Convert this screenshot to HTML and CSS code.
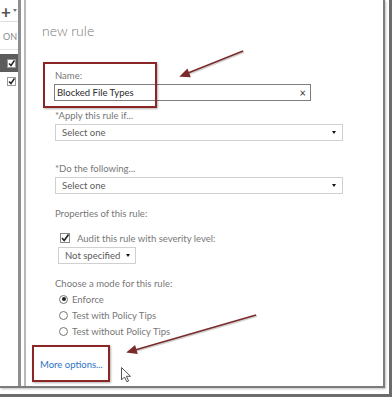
FILE: index.html
```html
<!DOCTYPE html>
<html lang="en">
<head>
    <meta charset="UTF-8">
    <title>new rule</title>
    <link rel="stylesheet" href="styles.css">
</head>
<body>
<div class="page">
    <div class="frame">
        <div class="shot">
            <div class="list">
                <div class="list-top"><span class="plus">+</span><span class="mini-caret"></span></div>
                <div class="list-head">ON</div>
                <div class="list-row selected"><span class="tick"></span></div>
                <div class="list-row"><span class="tick"></span></div>
            </div>
            <div class="panel">
                <div class="title">new rule</div>
                <div class="form">
                    <div class="label first">Name:</div>
                    <div class="input">
                        <span>Blocked File Types</span>
                        <span class="clear">&times;</span>
                    </div>

                    <div class="label gap-s">*Apply this rule if...</div>
                    <div class="select"><span>Select one</span><span class="caret"></span></div>

                    <div class="label gap-l">*Do the following...</div>
                    <div class="select"><span>Select one</span><span class="caret"></span></div>

                    <div class="label gap-m">Properties of this rule:</div>
                    <div class="check-row">
                        <span class="box checked"></span>
                        <span>Audit this rule with severity level:</span>
                    </div>
                    <div class="select small"><span>Not specified</span><span class="caret"></span></div>

                    <div class="label gap-mode">Choose a mode for this rule:</div>
                    <div class="radios">
                        <div class="radio-row"><span class="radio on"></span>Enforce</div>
                        <div class="radio-row"><span class="radio"></span>Test with Policy Tips</div>
                        <div class="radio-row"><span class="radio"></span>Test without Policy Tips</div>
                    </div>
                </div>
                <a class="more" href="#">More options...</a>
            </div>
        </div>
    </div>

    <!-- annotations drawn over the screenshot -->
    <div class="mark mark-name"></div>
    <div class="mark mark-more"></div>
    <svg class="arrows" width="392" height="397" viewBox="0 0 392 397">
        <g stroke="rgba(0,0,0,0.18)" stroke-width="2" fill="rgba(0,0,0,0.18)">
            <line x1="244" y1="52" x2="189" y2="74"/>
            <line x1="257" y1="316" x2="136" y2="351"/>
        </g>
        <g stroke="#7b2a2a" stroke-width="1.5" fill="#7b2a2a">
            <line x1="243" y1="51" x2="188" y2="73"/>
            <polygon points="181,76 189.7,76.4 187.2,69.8"/>
            <line x1="256" y1="315" x2="135" y2="350"/>
            <polygon points="128,352 136.7,353.2 134.7,346.4"/>
        </g>
        <path class="cursor" d="M121.5 367.5 V380 L124.5 377 L126.8 381.8 L128.6 381 L126.4 376.3 H130.5 Z"/>
    </svg>
</div>
</body>
</html>
```

FILE: styles.css
```css
body {
    margin: 0;
    background-color: #fff;
    font-family: Lato, "Open Sans", sans-serif;
}

.page {
    position: relative;
    width: 392px;
    height: 397px;
    overflow: hidden;
}

.frame {
    width: 392px;
    height: 397px;
    box-sizing: border-box;
    border-right: 3px solid #6c6c6c;
    border-bottom: 3px solid #6c6c6c;
    padding: 0 4px 6px 0;
}

.shot {
    height: 100%;
    box-sizing: border-box;
    border-right: 2px solid #7c7c7c;
    border-bottom: 2px solid #7c7c7c;
    box-shadow: 1px 1px 2px rgba(0, 0, 0, 0.25);
    display: flex;
}

/* left list strip */
.list {
    width: 18px;
    flex: none;
    border-right: 3px solid #8e8e8e;
}

.list-top {
    height: 21px;
    border-bottom: 1px solid #dedede;
    display: flex;
    align-items: flex-start;
    color: #555;
}

.plus {
    font-size: 17px;
    font-weight: bold;
    line-height: 17px;
    margin: 3px 0 0 1px;
}

.mini-caret {
    width: 0;
    height: 0;
    border-left: 2px solid transparent;
    border-right: 2px solid transparent;
    border-top: 3px solid #777;
    margin: 9px 0 0 2px;
}

.list-head {
    height: 25px;
    margin-top: 2px;
    border-bottom: 1px solid #e4e4e4;
    font-size: 9px;
    color: #8a8a8a;
    line-height: 25px;
    padding-left: 3px;
}

.list-row {
    height: 19px;
    display: flex;
    align-items: center;
    padding-left: 7px;
}

.list-row.selected {
    height: 18px;
    margin-top: 4px;
    background-color: #5c5c5c;
}

.tick {
    width: 7px;
    height: 7px;
    background: #fff url("data:image/svg+xml;utf8,<svg xmlns='http://www.w3.org/2000/svg' viewBox='0 0 7 7'><path d='M1 3.5 L3 5.5 L6.5 0.5' fill='none' stroke='%23222' stroke-width='1.5'/></svg>") no-repeat;
    border: 1px solid #999;
}

/* main dialog */
.panel {
    flex: 1;
    margin-left: 3px;
    border-left: 2px solid #b8b8b8;
    padding-left: 16px;
    color: #6b6b6b;
}

.title {
    margin-top: 21px;
    font-size: 14px;
    font-weight: 300;
    line-height: 20px;
    color: #7a7a7a;
}

.form {
    padding-left: 13px;
    font-size: 9.5px;
}

.label {
    line-height: 12px;
    color: #777;
}

.label.first {
    margin-top: 29px;
}

.gap-s {
    margin-top: 9px;
}

.gap-l {
    margin-top: 22px;
}

.gap-m {
    margin-top: 14px;
}

.gap-mode {
    margin-top: 14px;
}

.input {
    width: 257px;
    height: 17px;
    box-sizing: border-box;
    margin: 2px 0 0 -1px;
    border: 1px solid #7e7e7e;
    display: flex;
    align-items: center;
    justify-content: space-between;
    padding: 0 4px 0 2px;
    color: #2a2a2a;
    font-size: 9.5px;
}

.clear {
    font-size: 11px;
    color: #333;
}

.select {
    width: 288px;
    height: 17px;
    box-sizing: border-box;
    margin-top: 2px;
    border: 1px solid #d0d0d0;
    display: flex;
    align-items: center;
    justify-content: space-between;
    padding: 0 6px;
    color: #5a5a5a;
}

.select.small {
    width: 78px;
    margin: 3px 0 0 3px;
    padding-right: 5px;
}

.caret {
    width: 0;
    height: 0;
    border-left: 2.5px solid transparent;
    border-right: 2.5px solid transparent;
    border-top: 3px solid #111;
}

.check-row {
    display: flex;
    align-items: center;
    height: 12px;
    margin-top: 12px;
    padding-left: 5px;
    color: #777;
}

.box {
    width: 8px;
    height: 8px;
    border: 1px solid #888;
    margin-right: 7px;
}

.box.checked {
    background: url("data:image/svg+xml;utf8,<svg xmlns='http://www.w3.org/2000/svg' viewBox='0 0 8 8'><path d='M1 4 L3.2 6.5 L7.5 0.5' fill='none' stroke='%23222' stroke-width='1.6'/></svg>") no-repeat;
}

.radios {
    margin-top: 1px;
}

.radio-row {
    display: flex;
    align-items: center;
    height: 16px;
    padding-left: 4px;
    color: #777;
}

.radio {
    width: 7px;
    height: 7px;
    border: 1px solid #777;
    border-radius: 50%;
    margin-right: 4px;
    display: flex;
    align-items: center;
    justify-content: center;
}

.radio.on::after {
    content: "";
    width: 4px;
    height: 4px;
    border-radius: 50%;
    background-color: #222;
}

.more {
    display: block;
    margin: 20px 0 0 -2px;
    font-size: 9.5px;
    line-height: 12px;
    color: #2d74c4;
    text-decoration: none;
}

/* annotations */
.mark {
    position: absolute;
    border: 2px solid #8a2626;
    box-shadow: 1px 1px 2px rgba(0, 0, 0, 0.3);
}

.mark-name {
    left: 43px;
    top: 62px;
    width: 110px;
    height: 42px;
}

.mark-more {
    left: 32px;
    top: 345px;
    width: 74px;
    height: 33px;
}

.arrows {
    position: absolute;
    left: 0;
    top: 0;
}

.cursor {
    fill: #fff;
    stroke: #555;
    stroke-width: 1;
}
```
